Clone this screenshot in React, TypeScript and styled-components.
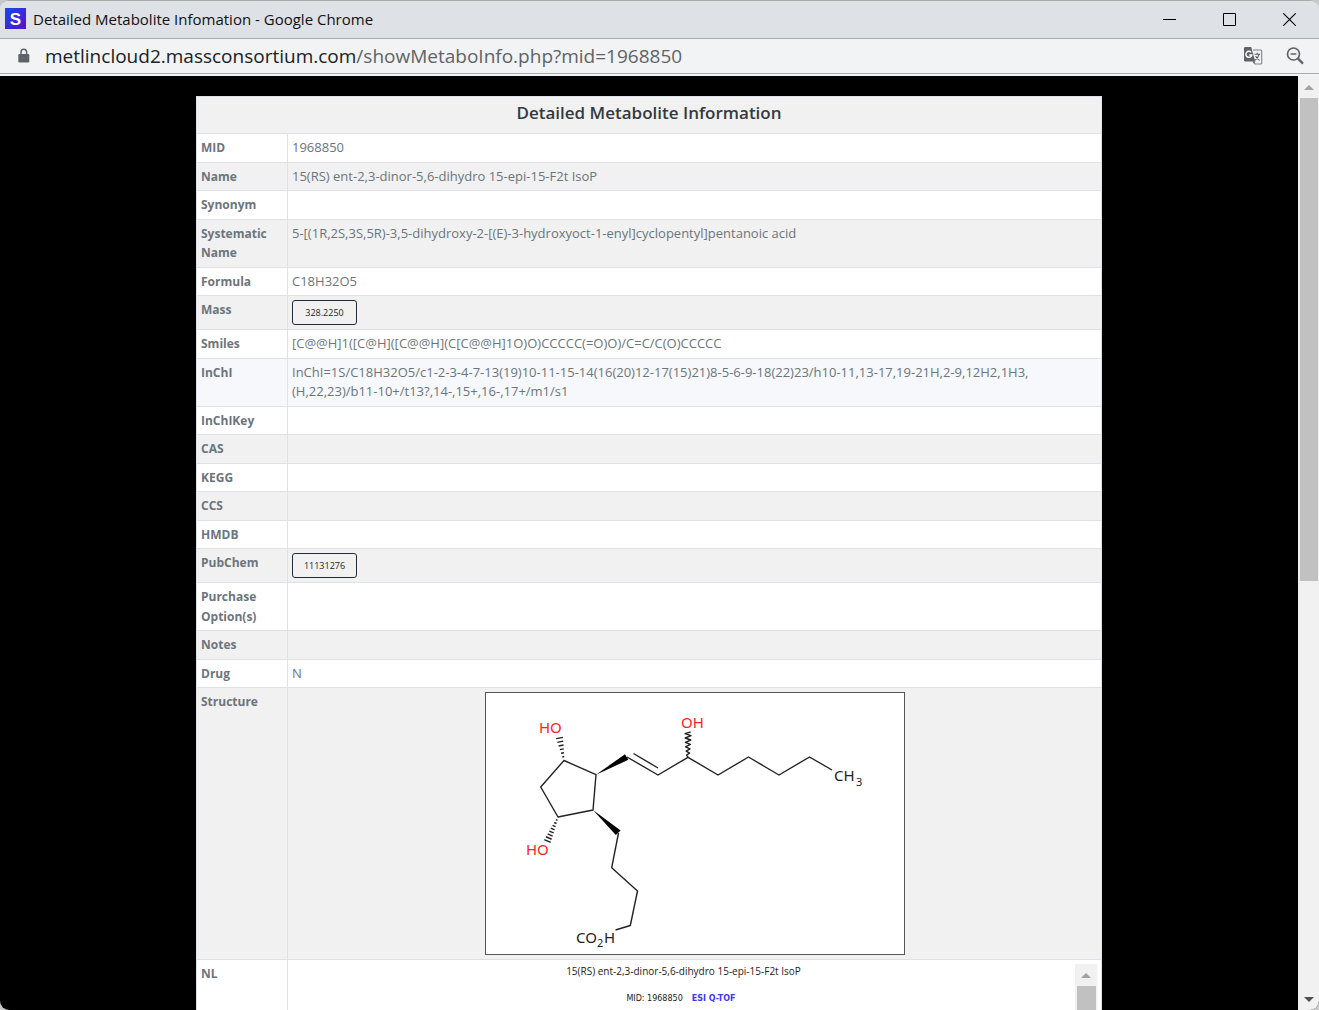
import React from "react";
import styled, { createGlobalStyle } from "styled-components";

const GlobalStyle = createGlobalStyle`
  * { box-sizing: border-box; }
  body {
    margin: 0;
    background: #c8c8c8;
    font-family: "Open Sans", "Noto Sans", sans-serif;
  }
`;

const BrowserWindow = styled.div`
  display: flex;
  flex-direction: column;
  height: 100vh;
  overflow: hidden;
  border-top: 1px solid #a9abad;
  border-radius: 9px;
  background: #f1f3f4;
`;

const TitleBar = styled.header`
  display: flex;
  align-items: center;
  flex: none;
  height: 38px;
  padding: 0 6px 2px 5px;
  background: #dee1e6;
  border-bottom: 1px solid #a9abad;
`;

const WindowTitle = styled.span`
  flex: 1;
  padding-left: 7px;
  font-size: 15px;
  line-height: 20px;
  color: #111;
`;

const WindowButton = styled.button`
  display: flex;
  align-items: center;
  justify-content: center;
  width: 48px;
  height: 34px;
  margin-left: 12px;
  padding: 2px 0 0;
  border: 0;
  background: none;
`;

const AddressBar = styled.div`
  display: flex;
  align-items: center;
  flex: none;
  height: 35px;
  padding: 0 14px 0 17px;
  background: #f1f3f4;
  border-bottom: 1px solid #a9abad;
`;

const Address = styled.span`
  flex: 1;
  padding-left: 14px;
  font-size: 19px;
  line-height: 28px;
  color: #5f6368;
`;

const Host = styled.span`
  color: #202124;
`;

const ToolButton = styled.button`
  display: flex;
  padding: 0;
  border: 0;
  margin-left: 22px;
  background: none;
`;

const Viewport = styled.div`
  display: flex;
  flex: 1;
  min-height: 0;
  margin-top: 2px;
  background: #000;
`;

const Page = styled.main`
  flex: 1;
  min-width: 0;
  padding: 20px 196px;
  overflow: hidden;
`;

const Track = styled.div<{ $width: number }>`
  display: flex;
  flex-direction: column;
  align-items: center;
  flex: none;
  width: ${(p) => p.$width}px;
  background: #f1f1f1;
`;

const ScrollArrow = styled.button<{ $down?: boolean }>`
  display: flex;
  align-items: center;
  justify-content: center;
  flex: none;
  width: 100%;
  height: 22px;
  padding: 0;
  border: 0;
  background: none;

  &::before {
    content: "";
    border: 5px solid transparent;
    border-top: ${(p) => (p.$down ? "5px solid #505050" : "0")};
    border-bottom: ${(p) => (p.$down ? "0" : "5px solid #a3a3a3")};
  }
`;

const Rail = styled.div`
  flex: 1;
  align-self: stretch;
  padding: 0 1px 0 2px;
`;

const Thumb = styled.div<{ $size: string }>`
  height: ${(p) => p.$size};
  background: #c1c1c1;
`;

const InfoTable = styled.table`
  width: 100%;
  table-layout: fixed;
  border-collapse: collapse;
  border: 1px solid #dee2e6;
  background: #fff;
  font-size: 13px;
  line-height: 150%;
  color: #6c757d;
`;

const LabelCol = styled.col`
  width: 91px;
`;

const Row = styled.tr<{ $tone?: string }>`
  background: ${(p) => p.$tone || "#fff"};
`;

const TitleCell = styled.th`
  height: 37px;
  padding: 4px;
  vertical-align: top;
  font-size: 17px;
  font-weight: 600;
  line-height: 23px;
  color: #343a40;
`;

const Label = styled.th`
  padding: 4px;
  border: 1px solid #dee2e6;
  vertical-align: top;
  text-align: left;
  font-size: 12px;
  font-weight: 700;
`;

const Value = styled.td`
  padding: 4px;
  border: 1px solid #dee2e6;
  vertical-align: top;
`;

const LinkButton = styled.button`
  display: block;
  width: 65px;
  height: 25px;
  padding: 0;
  border: 1px solid #212b38;
  border-radius: 3px;
  background: transparent;
  font-family: inherit;
  font-size: 9px;
  color: #212529;
`;

const Figure = styled.div`
  width: 420px;
  margin: 0 auto;
  border: 1px solid #555;
  background: #fff;

  svg {
    display: block;
  }
`;

const SpectrumFrame = styled.div`
  display: flex;
  height: 300px;
`;

const Spectrum = styled.div`
  flex: 1;
  text-align: center;
`;

const SpectrumTitle = styled.div`
  font-size: 10px;
  line-height: 15px;
  color: #222;
`;

const SpectrumMeta = styled.div`
  padding: 14px 5px 0 0;
  font-family: "DejaVu Sans", sans-serif;
  font-size: 8px;
  line-height: 12px;
  color: #222;
`;

const Method = styled.a`
  margin-left: 9px;
  font-weight: 700;
  color: #3a3af0;
  text-decoration: none;
`;

function Scrollbar({ width, thumb, arrows = "both" }: { width: number; thumb: string; arrows?: string }) {
  return (
    <Track $width={width}>
      <ScrollArrow aria-label="Scroll up" />
      <Rail>
        <Thumb $size={thumb} />
      </Rail>
      {arrows === "both" && <ScrollArrow $down aria-label="Scroll down" />}
    </Track>
  );
}

function Hash({ from, to, count }: { from: number[]; to: number[]; count: number }) {
  const dx = to[0] - from[0];
  const dy = to[1] - from[1];
  const len = Math.hypot(dx, dy);
  const lines = [];
  for (let i = 1; i <= count; i++) {
    const t = i / count;
    const w = 0.5 + 3 * t;
    const x = from[0] + dx * t;
    const y = from[1] + dy * t;
    lines.push(
      <line
        key={i}
        x1={x - (dy / len) * w}
        y1={y + (dx / len) * w}
        x2={x + (dy / len) * w}
        y2={y - (dx / len) * w}
      />
    );
  }
  return <g>{lines}</g>;
}

function Molecule() {
  return (
    <svg width="418" height="261" viewBox="0 0 418 261" role="img" aria-label="Chemical structure">
      <g fill="none" stroke="#222" strokeWidth="1.4" strokeLinejoin="round">
        <path d="M78 67.5 110 81.7 107 117 72 124 54.7 94Z" />
        <path d="M141 64 172 82 202 64.3 232 82 262.5 64 293 82 323.5 64 346 77" />
        <path d="M147.5 60.5 172 75" />
        <path d="M132.5 140 125.7 174.7 151.5 198 144.3 232.5 129.5 237" />
        <path d="M202 64l-1.4-2 3-1.8-3.4-2 3.8-2.4-4.4-2 4.8-2.4-5-2 5.4-2.4-5.6-2 5.8-2.4-6-2 5.6-1.6" strokeWidth="1.4" />
        <Hash from={[78, 67.5]} to={[73.6, 45]} count={6} />
        <Hash from={[72, 124]} to={[61.5, 148]} count={8} />
      </g>
      <g fill="#000">
        <path d="M110 81.7 139 61.2 142.4 66.8Z" />
        <path d="M107 117 134.6 137.4 129.8 142Z" />
      </g>
      <g fontFamily='"Noto Sans", sans-serif' fontSize="15">
        <g fill="#f22">
          <text x="53" y="40">HO</text>
          <text x="195" y="35">OH</text>
          <text x="40" y="162">HO</text>
        </g>
        <g fill="#222">
          <text x="348" y="88">CH</text>
          <text x="370" y="93" fontSize="11">3</text>
          <text x="90" y="250">CO</text>
          <text x="111" y="254" fontSize="11">2</text>
          <text x="118" y="250">H</text>
        </g>
      </g>
    </svg>
  );
}

const GREY = "#f1f1f1";

const rows: { label: string; value?: React.ReactNode; tone?: string }[] = [
  { label: "MID", value: "1968850" },
  { label: "Name", value: "15(RS) ent-2,3-dinor-5,6-dihydro 15-epi-15-F2t IsoP", tone: GREY },
  { label: "Synonym" },
  {
    label: "Systematic Name",
    value: "5-[(1R,2S,3S,5R)-3,5-dihydroxy-2-[(E)-3-hydroxyoct-1-enyl]cyclopentyl]pentanoic acid",
    tone: GREY,
  },
  { label: "Formula", value: "C18H32O5" },
  { label: "Mass", value: <LinkButton>328.2250</LinkButton>, tone: GREY },
  { label: "Smiles", value: "[C@@H]1([C@H]([C@@H](C[C@@H]1O)O)CCCCC(=O)O)/C=C/C(O)CCCCC" },
  {
    label: "InChI",
    value: (
      <>
        InChI=1S/C18H32O5/c1-2-3-4-7-13(19)10-11-15-14(16(20)12-17(15)21)8-5-6-9-18(22)23/h10-11,13-17,19-21H,2-9,12H2,1H3,
        <br />
        (H,22,23)/b11-10+/t13?,14-,15+,16-,17+/m1/s1
      </>
    ),
    tone: "#f6f8fb",
  },
  { label: "InChIKey" },
  { label: "CAS", tone: GREY },
  { label: "KEGG" },
  { label: "CCS", tone: GREY },
  { label: "HMDB" },
  { label: "PubChem", value: <LinkButton>11131276</LinkButton>, tone: GREY },
  { label: "Purchase Option(s)" },
  { label: "Notes", tone: GREY },
  { label: "Drug", value: "N" },
  {
    label: "Structure",
    value: (
      <Figure>
        <Molecule />
      </Figure>
    ),
    tone: GREY,
  },
  {
    label: "NL",
    value: (
      <SpectrumFrame>
        <Spectrum>
          <SpectrumTitle>15(RS) ent-2,3-dinor-5,6-dihydro 15-epi-15-F2t IsoP</SpectrumTitle>
          <SpectrumMeta>
            MID: 1968850<Method href="#esi">ESI Q-TOF</Method>
          </SpectrumMeta>
        </Spectrum>
        <Scrollbar width={22} thumb="50%" />
      </SpectrumFrame>
    ),
  },
];

export default function App() {
  return (
    <>
      <GlobalStyle />
      <BrowserWindow>
        <TitleBar>
          <svg width="21" height="21" viewBox="0 0 21 21" aria-hidden="true">
            <defs>
              <linearGradient id="brand" x1="0" y1="0" x2="1" y2="1">
                <stop offset="0" stopColor="#1648f0" />
                <stop offset="1" stopColor="#5a10c8" />
              </linearGradient>
            </defs>
            <rect width="21" height="21" fill="url(#brand)" />
            <text x="10.5" y="16.5" textAnchor="middle" fontFamily='"Liberation Sans", sans-serif' fontWeight="700" fontSize="17" fill="#fff">S</text>
          </svg>
          <WindowTitle>Detailed Metabolite Infomation - Google Chrome</WindowTitle>
          <WindowButton aria-label="Minimize">
            <svg width="13" height="13" viewBox="0 0 13 13"><path d="M0 6.5H13" stroke="#000" /></svg>
          </WindowButton>
          <WindowButton aria-label="Maximize">
            <svg width="13" height="13" viewBox="0 0 13 13"><path d="M.5 .5H12.5V12.5H.5Z" fill="none" stroke="#000" /></svg>
          </WindowButton>
          <WindowButton aria-label="Close">
            <svg width="13" height="13" viewBox="0 0 13 13"><path d="M.3 .3 12.7 12.7M12.7 .3 .3 12.7" stroke="#000" strokeWidth="1.1" /></svg>
          </WindowButton>
        </TitleBar>
        <AddressBar>
          <svg width="14" height="16" viewBox="0 0 14 16" aria-hidden="true">
            <rect x="1.3" y="6" width="11" height="8.6" rx="1.3" fill="#5f6368" />
            <path d="M4 7V4a2.8 2.8 0 0 1 5.6 0V7" fill="none" stroke="#5f6368" strokeWidth="1.5" />
          </svg>
          <Address>
            <Host>metlincloud2.massconsortium.com</Host>/showMetaboInfo.php?mid=1968850
          </Address>
          <ToolButton aria-label="Translate this page">
            <svg width="20" height="20" viewBox="0 0 20 20">
              <path d="M10 4H17.7Q18.7 4 18.7 5V17Q18.7 18 17.7 18H12L10 15" fill="#f1f3f4" stroke="#808386" strokeWidth="1.1" />
              <path d="M2.2 1H8.2L12.2 15.4H2.2Q1 15.4 1 14.2V2.2Q1 1 2.2 1Z" fill="#5f6368" />
              <path d="M9.8 15.4H12.2L11.2 18Z" fill="#5f6368" />
              <path d="M8.2 6.4A3 3 0 1 0 8.8 9H6.2" fill="none" stroke="#fff" strokeWidth="1.4" />
              <path d="M11.6 8.2H17.2M14.2 6.8V8.2M16 8.3Q15.2 12 11.9 14.2M12.6 10Q14 12.8 16.6 14.4" fill="none" stroke="#5f6368" strokeWidth="1.1" />
            </svg>
          </ToolButton>
          <ToolButton aria-label="Zoom">
            <svg width="20" height="20" viewBox="0 0 20 20" fill="none" stroke="#5f6368">
              <circle cx="8.5" cy="8" r="6" strokeWidth="1.7" />
              <path d="M12.8 12.4 18 17.6" strokeWidth="2.3" />
              <path d="M5.6 8H11.4" strokeWidth="1.5" />
            </svg>
          </ToolButton>
        </AddressBar>
        <Viewport>
          <Page>
            <InfoTable>
              <colgroup>
                <LabelCol />
                <col />
              </colgroup>
              <thead>
                <Row $tone={GREY}>
                  <TitleCell colSpan={2}>Detailed Metabolite Information</TitleCell>
                </Row>
              </thead>
              <tbody>
                {rows.map((r) => (
                  <Row key={r.label} $tone={r.tone}>
                    <Label scope="row">{r.label}</Label>
                    <Value>{r.value}</Value>
                  </Row>
                ))}
              </tbody>
            </InfoTable>
          </Page>
          <Scrollbar width={21} thumb="54.3%" />
        </Viewport>
      </BrowserWindow>
    </>
  );
}
